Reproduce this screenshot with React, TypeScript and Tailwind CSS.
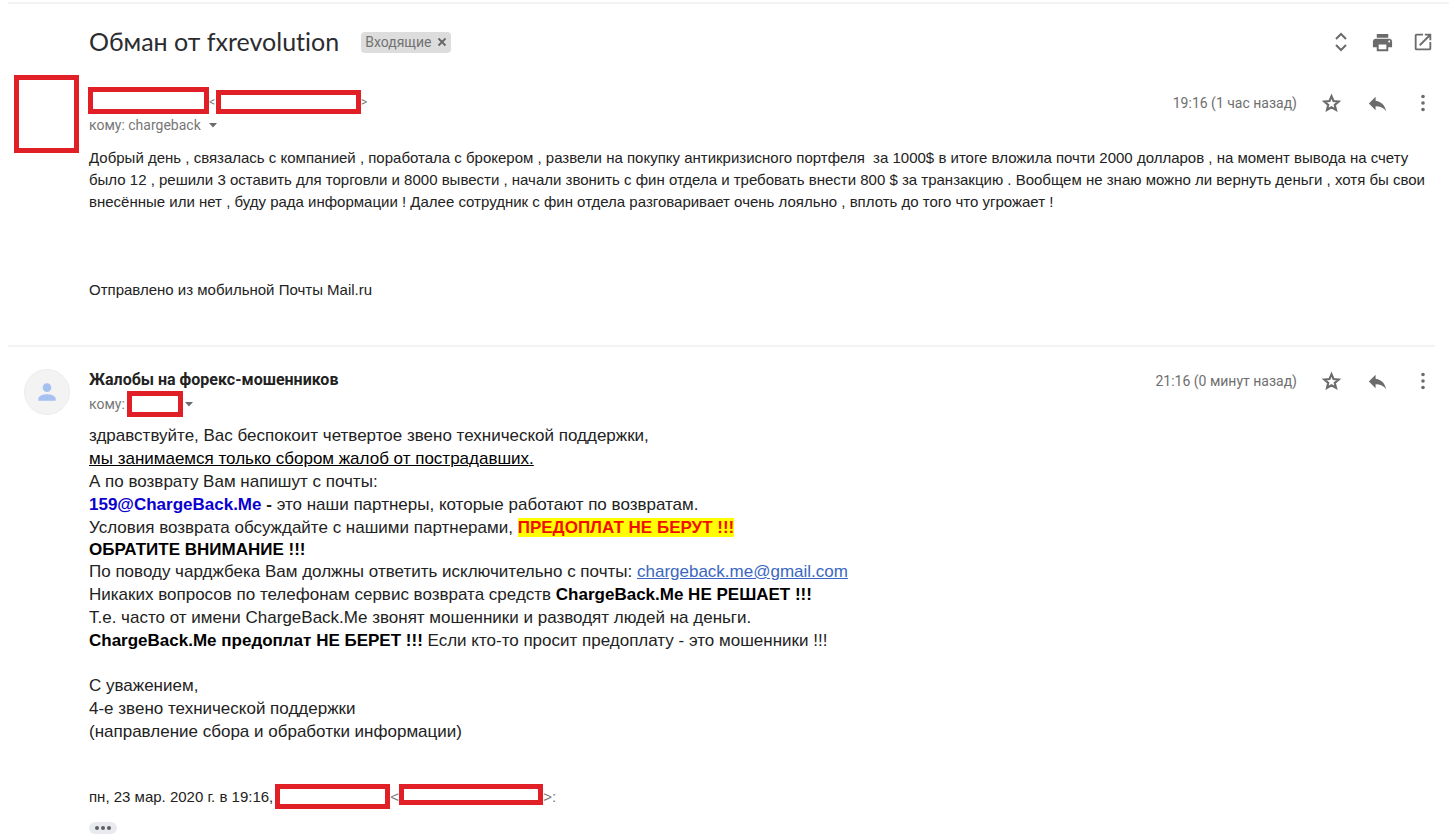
import type { ReactNode } from 'react'
import { MdOpenInNew, MdPerson, MdPrint, MdReply } from 'react-icons/md'

function IconButton({ label, children }: { label: string; children: ReactNode }) {
	return (
		<button type="button" aria-label={label} className="flex size-5 items-center justify-center text-[#6b6b6b] hover:text-black">
			{children}
		</button>
	)
}

function MessageActions({ time }: { time: string }) {
	return (
		<div className="flex h-6 shrink-0 items-center">
			<span className="mr-6 text-sm text-[#6f6f6f]">{time}</span>
			<div className="flex items-center gap-[26px]">
				<IconButton label="Пометить">
					<svg width="23" height="23" viewBox="0 0 24 24" fill="none" stroke="currentColor" strokeWidth="2.2" className="shrink-0">
						<path d="M12 4.4l2.1 5 5.4.5-4.1 3.5 1.3 5.3L12 15.9l-4.7 2.8 1.3-5.3-4.1-3.5 5.4-.5z" />
					</svg>
				</IconButton>
				<IconButton label="Ответить">
					<MdReply size={23} className="shrink-0" />
				</IconButton>
				<IconButton label="Ещё">
					<svg width="4" height="18" viewBox="0 0 4 18" fill="currentColor">
						<circle cx="2" cy="2.5" r="1.8" />
						<circle cx="2" cy="9" r="1.8" />
						<circle cx="2" cy="15.5" r="1.8" />
					</svg>
				</IconButton>
			</div>
		</div>
	)
}

function DetailsButton() {
	return (
		<button type="button" aria-label="Подробности" className="text-[#6b6b6b]">
			<svg width="8" height="5" viewBox="0 0 8 5" fill="currentColor">
				<path d="M0 0h8L4 4.5z" />
			</svg>
		</button>
	)
}

// Hidden personal data
function Redacted({ className }: { className: string }) {
	return <span className={`inline-block shrink-0 border-[5px] border-[#e01f27] bg-white ${className}`} />
}

export default function App() {
	return (
		<main className="overflow-hidden bg-white pt-[2px] pl-2 font-['Roboto',sans-serif] text-[#222]">
			<header className="flex h-[73px] items-center justify-between border-t-2 border-[#f3f3f3] pt-[5px] pr-4 pl-[81px]">
				<div className="flex items-center gap-[22px]">
					<h1 className="font-['Lato',sans-serif] text-[25px] text-[#2b2c2f] [font-variant-ligatures:none]">Обман от fxrevolution</h1>
					<span className="flex h-[21px] items-center gap-[6px] rounded bg-[#dddddd] px-1 text-sm text-[#737373]">
						Входящие
						<button type="button" aria-label="Удалить ярлык" className="text-[#666]">
							<svg width="10" height="10" viewBox="0 0 10 10" stroke="currentColor" strokeWidth="1.8">
								<path d="M1.5 1.5l7 7M8.5 1.5l-7 7" />
							</svg>
						</button>
					</span>
				</div>
				<div className="flex items-center gap-[21px]">
					<IconButton label="Развернуть все">
						<svg width="14" height="20" viewBox="0 0 14 20" fill="none" stroke="currentColor" strokeWidth="2" className="shrink-0">
							<path d="M2 7l5-5 5 5M2 13l5 5 5-5" />
						</svg>
					</IconButton>
					<IconButton label="Печать">
						<MdPrint size={23} className="shrink-0" />
					</IconButton>
					<IconButton label="В новом окне">
						<MdOpenInNew size={22} className="shrink-0" />
					</IconButton>
				</div>
			</header>

			<article className="mr-[14px] flex h-[270px]">
				<div className="w-20 shrink-0 pl-[6px]">
					<Redacted className="h-[78px] w-[65px]" />
				</div>
				<div className="min-w-0 grow">
					<div className="flex items-start justify-between pt-3 pr-[2px]">
						<div>
							<div className="flex items-end text-xs leading-6 text-[#777]">
								<Redacted className="h-[27px] w-[121px]" />
								<span className="w-[7px]">&lt;</span>
								<Redacted className="h-6 w-[145px]" />
								<span>&gt;</span>
							</div>
							<div className="flex h-[22px] items-center gap-2 pl-px text-sm text-[#777]">
								кому: chargeback
								<DetailsButton />
							</div>
						</div>
						<div className="pt-1">
							<MessageActions time="19:16 (1 час назад)" />
						</div>
					</div>
					<div className="pl-px pt-[11px] font-['Liberation_Sans',Arial,sans-serif] text-[15px] leading-[22px]">
						<p>
							Добрый день , связалась с компанией , поработала с брокером , развели на покупку антикризисного портфеля&nbsp; за 1000$ в итоге вложила
							почти 2000 долларов , на момент вывода на счету было 12 , решили 3 оставить для торговли и 8000 вывести , начали звонить с фин отдела и
							требовать внести 800 $ за транзакцию . Вообщем не знаю можно ли вернуть деньги , хотя бы свои внесённые или нет , буду рада информации !
							Далее сотрудник с фин отдела разговаривает очень лояльно , вплоть до того что угрожает !
						</p>
						<p className="mt-[66px]">Отправлено из мобильной Почты Mail.ru</p>
					</div>
				</div>
			</article>

			<article className="mr-[14px] flex border-t-2 border-[#f3f3f3]">
				<div className="w-[81px] shrink-0 pt-[22px] pl-4">
					<div className="flex size-[46px] items-center justify-center rounded-full border border-[#ececec] bg-[#f3f3f3] text-[#a6c1f0]">
						<MdPerson size={26} />
					</div>
				</div>
				<div className="min-w-0 grow">
					<div className="flex items-start justify-between pt-[22px] pr-[2px]">
						<div>
							<h2 className="text-base leading-[22px] font-bold">Жалобы на форекс-мошенников</h2>
							<div className="flex h-[26px] items-center gap-[2px] text-sm text-[#777]">
								кому:
								<Redacted className="h-[26px] w-[56px]" />
								<DetailsButton />
							</div>
						</div>
						<MessageActions time="21:16 (0 минут назад)" />
					</div>
					<div className="pt-[7px] font-['Liberation_Sans',Arial,sans-serif] text-[17px] leading-[23px]">
						<p>здравствуйте, Вас беспокоит четвертое звено технической поддержки,</p>
						<p className="text-black underline">мы занимаемся только сбором жалоб от пострадавших.</p>
						<p>А по возврату Вам напишут с почты:</p>
						<p>
							<b className="text-[#0b00d0]">159@ChargeBack.Me</b> <b>-</b> это наши партнеры, которые работают по возвратам.
						</p>
						<p>
							Условия возврата обсуждайте с нашими партнерами, <b className="bg-[#ffff00] text-[#f01000]">ПРЕДОПЛАТ НЕ БЕРУТ !!!</b>
						</p>
						<p className="leading-[21px] font-bold text-black">ОБРАТИТЕ ВНИМАНИЕ !!!</p>
						<p>
							По поводу чарджбека Вам должны ответить исключительно с почты:{' '}
							<a href="mailto:chargeback.me@gmail.com" className="text-[#3a67c0] underline">
								chargeback.me@gmail.com
							</a>
						</p>
						<p>
							Никаких вопросов по телефонам сервис возврата средств <b className="text-black">ChargeBack.Me НЕ РЕШАЕТ !!!</b>
						</p>
						<p>Т.е. часто от имени ChargeBack.Me звонят мошенники и разводят людей на деньги.</p>
						<p>
							<b className="text-black">ChargeBack.Me предоплат НЕ БЕРЕТ !!!</b> Если кто-то просит предоплату - это мошенники !!!
						</p>
						<div className="mt-[22px]">
							<p>С уважением,</p>
							<p>4-е звено технической поддержки</p>
							<p>(направление сбора и обработки информации)</p>
						</div>
					</div>
					<div className="mt-[41px] flex font-['Liberation_Sans',Arial,sans-serif] text-[15px] leading-[25px]">
						пн, 23 мар. 2020 г. в 19:16,
						<Redacted className="ml-[2px] h-[25px] w-[115px]" />
						<span className="w-[9px] text-[#777]">&lt;</span>
						<Redacted className="h-[21px] w-[144px]" />
						<span className="text-[#777]">&gt;:</span>
					</div>
					<button
						type="button"
						aria-label="Показать скрытый текст"
						className="mt-[13px] flex h-3 w-7 items-center justify-center gap-[2px] rounded-md bg-[#e8eaed]"
					>
						<i className="size-1 rounded-full bg-[#5c5f63]" />
						<i className="size-1 rounded-full bg-[#5c5f63]" />
						<i className="size-1 rounded-full bg-[#5c5f63]" />
					</button>
				</div>
			</article>
		</main>
	)
}
